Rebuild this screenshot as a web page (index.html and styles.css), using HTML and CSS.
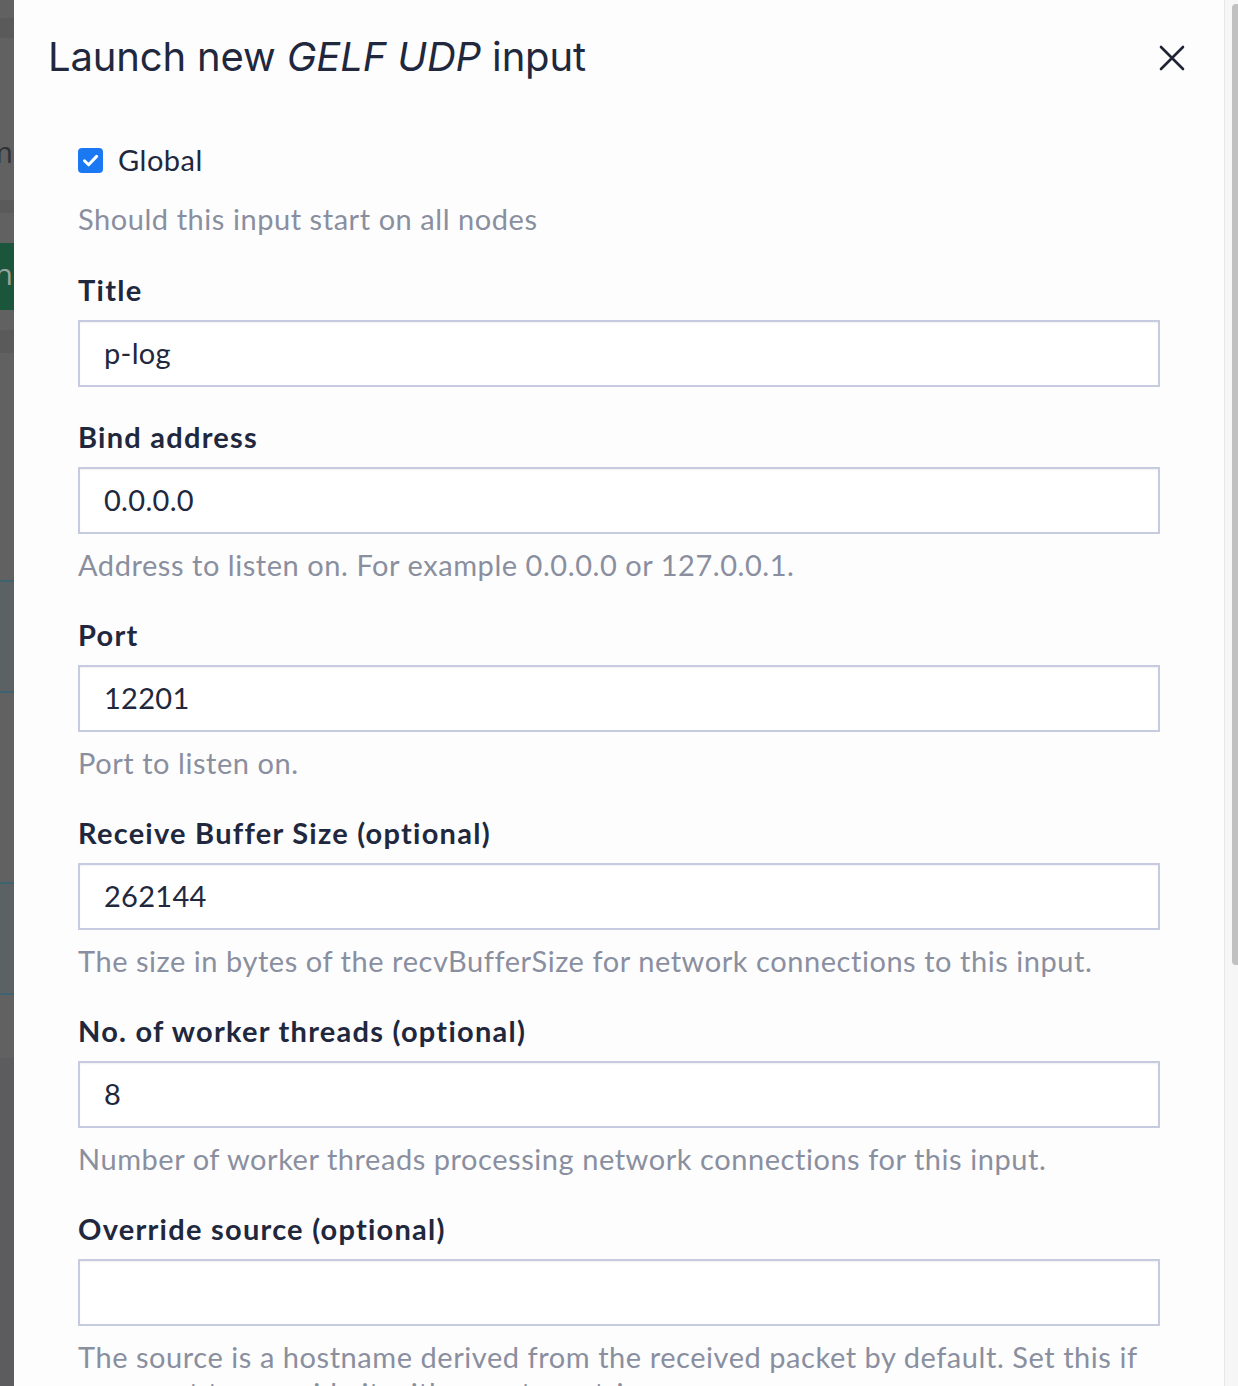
FILE: index.html
```html
<!DOCTYPE html>
<html lang="en">
<head>
<meta charset="utf-8">
<title>Launch new GELF UDP input</title>
<link rel="stylesheet" href="styles.css">
</head>
<body>
<div class="screen">
  <div class="backdrop">
    <div class="bd b1"></div>
    <div class="bd b2"></div>
    <div class="bd b3"><span class="bd-letter">m</span></div>
    <div class="bd b4"></div>
    <div class="bd b5"></div>
    <div class="bd b6"><span class="bd-letter light">n</span></div>
    <div class="bd b7"></div>
    <div class="bd b8"></div>
    <div class="bd b9"></div>
    <div class="bd line"></div>
    <div class="bd row1"></div>
    <div class="bd line"></div>
    <div class="bd b10"></div>
    <div class="bd line"></div>
    <div class="bd row1"></div>
    <div class="bd line"></div>
    <div class="bd b11"></div>
    <div class="bd b12"></div>
  </div>
  <div class="modal">
    <div class="modal-header">
      <h1 class="modal-title">Launch new <em>GELF UDP</em> input</h1>
      <button class="close" aria-label="Close">
        <svg width="26" height="26" viewBox="0 0 26 26"><path d="M2 2 L24 24 M24 2 L2 24" stroke="#1f2437" stroke-width="2.6" stroke-linecap="round" fill="none"/></svg>
      </button>
    </div>
    <div class="modal-body">
      <div class="group first">
        <label class="check">
          <span class="box"><svg width="25" height="25" viewBox="0 0 25 25"><path d="M6.5 12.8 L10.6 16.8 L18.6 8.4" stroke="#fff" stroke-width="3" fill="none" stroke-linecap="round" stroke-linejoin="round"/></svg></span>
          <span>Global</span>
        </label>
        <div class="help first">Should this input start on all nodes</div>
      </div>
      <div class="group">
        <div class="label">Title</div>
        <div class="input">p-log</div>
      </div>
      <div class="group">
        <div class="label">Bind address</div>
        <div class="input">0.0.0.0</div>
        <div class="help">Address to listen on. For example 0.0.0.0 or 127.0.0.1.</div>
      </div>
      <div class="group">
        <div class="label">Port</div>
        <div class="input">12201</div>
        <div class="help">Port to listen on.</div>
      </div>
      <div class="group">
        <div class="label">Receive Buffer Size (optional)</div>
        <div class="input">262144</div>
        <div class="help">The size in bytes of the recvBufferSize for network connections to this input.</div>
      </div>
      <div class="group">
        <div class="label">No. of worker threads (optional)</div>
        <div class="input">8</div>
        <div class="help">Number of worker threads processing network connections for this input.</div>
      </div>
      <div class="group">
        <div class="label">Override source (optional)</div>
        <div class="input"></div>
        <div class="help">The source is a hostname derived from the received packet by default. Set this if<br>you want to override it with a custom string.</div>
      </div>
    </div>
  </div>
  <div class="scrollbar"><div class="thumb"></div></div>
</div>
</body>
</html>
```
FILE: styles.css
```css
* { box-sizing: border-box; }
html, body { margin: 0; padding: 0; }
body {
  width: 1238px;
  height: 1386px;
  overflow: hidden;
  background: #fcfcfc;
  font-family: "Lato", "Liberation Sans", sans-serif;
  color: #21283d;
}
.screen {
  display: flex;
  height: 1386px;
}
.backdrop {
  width: 14px;
  flex: none;
  background: #616161;
  display: flex;
  flex-direction: column;
  overflow: hidden;
}
.bd { flex: none; width: 14px; overflow: hidden; position: relative; }
.b1 { height: 18px; }
.b2 { height: 20px; background: #5a5a5b; }
.b3 { height: 162px; }
.b4 { height: 13px; background: #5a5a5b; }
.b5 { height: 30px; }
.b6 { height: 67px; background: #1b553b; }
.b7 { height: 20px; }
.b8 { height: 23px; background: #5a5a5b; }
.b9 { height: 227px; }
.line { height: 2px; background: #3e6370; }
.row1 { height: 109px; background: #5c6163; }
.b10 { height: 189px; }
.b11 { height: 63px; }
.b12 { flex: 1; background: #5c5c5e; }
.bd-letter {
  position: absolute;
  right: 1px;
  font-size: 30px;
  line-height: 30px;
  color: #2f3236;
  font-family: "Open Sans", sans-serif;
}
.b3 .bd-letter { top: 99px; }
.b6 .bd-letter { top: 16px; color: #9aa39e; }

.modal {
  flex: 1;
  background: #fdfdfd;
  border-right: 1px solid #e6e6e6;
}
.modal-header {
  display: flex;
  justify-content: space-between;
  align-items: flex-start;
  padding: 32px 40px 0 34px;
  height: 114px;
}
.modal-title {
  margin: 0;
  font-family: "Inter", "Liberation Sans", sans-serif;
  font-weight: 400;
  font-size: 40px;
  line-height: 50px;
  color: #21283d;
  letter-spacing: -0.15px;
}
.modal-title em { font-style: italic; }
.close {
  border: 0;
  background: transparent;
  padding: 0;
  margin-top: 13px;
  margin-right: -1px;
  width: 26px;
  height: 26px;
  display: flex;
}
.modal-body {
  padding: 28px 64px 0 64px;
}
.group {
  display: flex;
  flex-direction: column;
  margin-bottom: 34px;
}
.group.first { margin-bottom: 35px; }
.check {
  display: flex;
  align-items: center;
  gap: 15px;
  font-size: 29px;
  letter-spacing: 0.5px;
  line-height: 36px;
  color: #21283d;
}
.box {
  width: 25px;
  height: 25px;
  border-radius: 4px;
  background: #1a78f2;
  display: flex;
}
.label {
  font-size: 29px;
  line-height: 32px;
  font-weight: 700;
  letter-spacing: 1.25px;
  color: #21283d;
  margin-bottom: 14px;
}
.input {
  height: 67px;
  border: 2px solid #c6cbe0;
  background: #fff;
  box-shadow: inset 0 1px 2px rgba(0,0,0,0.06);
  padding: 0 24px;
  font-size: 29px;
  letter-spacing: 0.3px;
  line-height: 61px;
  color: #21283d;
}
.help {
  margin-top: 13px;
  margin-bottom: 2px;
  font-size: 29px;
  letter-spacing: 0.55px;
  line-height: 36px;
  color: #8a8fa0;
}
.help.first { margin-top: 23px; }
.scrollbar {
  width: 13px;
  flex: none;
  background: #f6f6f6;
  padding: 4px 0 0 7px;
}
.thumb {
  height: 961px;
  background: #c1c1c1;
  border-radius: 4px 0 0 4px;
}
```
